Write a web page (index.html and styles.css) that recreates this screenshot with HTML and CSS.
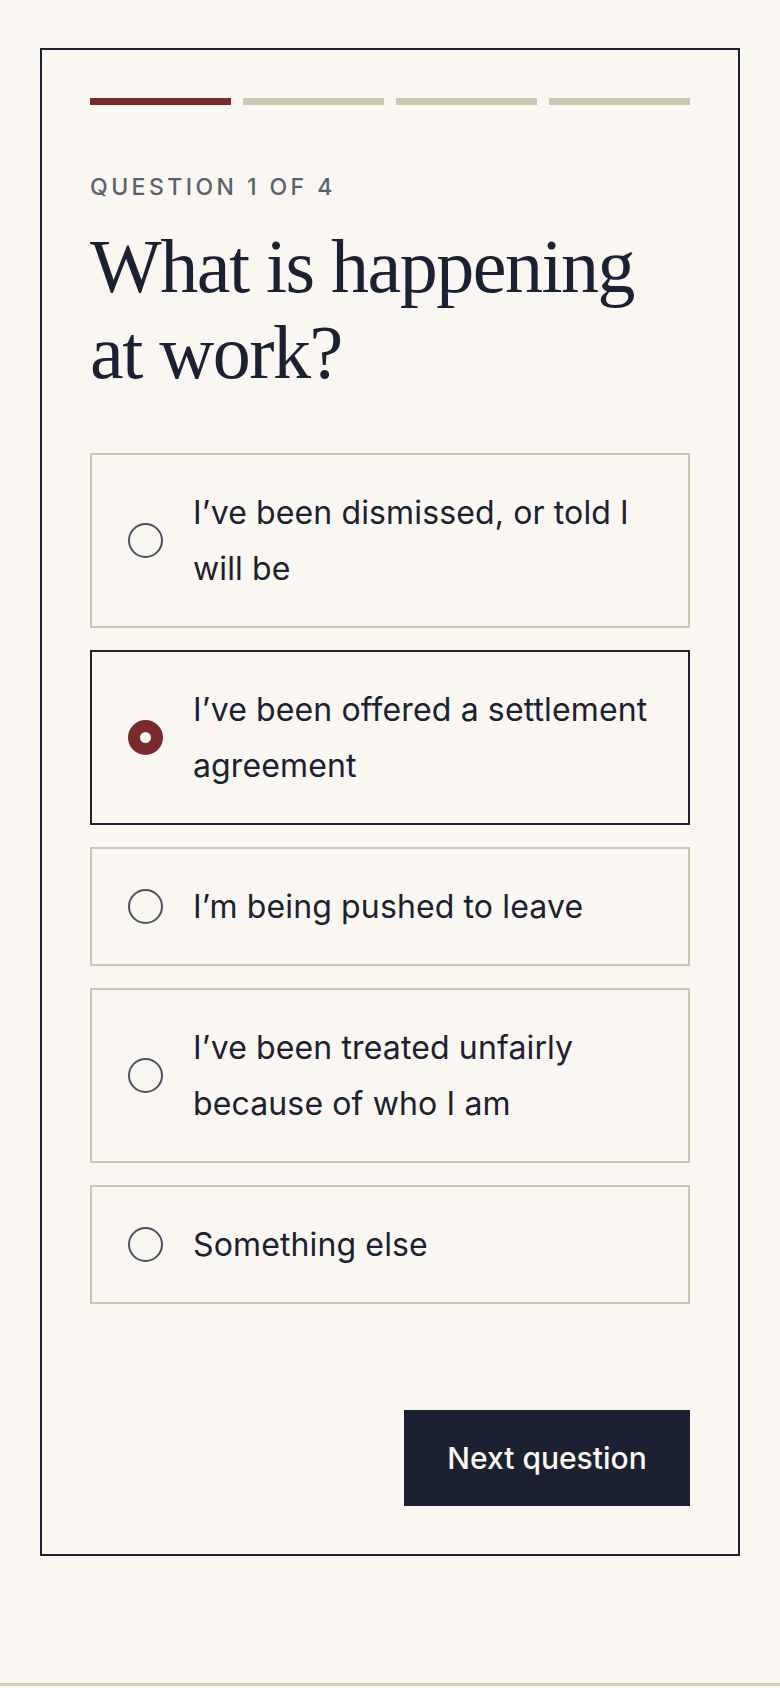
FILE: index.html
```html
<!DOCTYPE html>
<html lang="en">
<head>
<meta charset="utf-8">
<title>Question 1 of 4</title>
<link rel="stylesheet" href="styles.css">
</head>
<body>
<main class="page">
  <section class="card">
    <div class="progress">
      <span class="seg seg-done"></span>
      <span class="seg"></span>
      <span class="seg"></span>
      <span class="seg"></span>
    </div>
    <p class="eyebrow">QUESTION 1 OF 4</p>
    <h1 class="title">What is happening at work?</h1>
    <div class="options">
      <label class="option">
        <span class="radio"></span>
        <span class="option-text">I’ve been dismissed, or told I will be</span>
      </label>
      <label class="option option-selected">
        <span class="radio radio-on"></span>
        <span class="option-text">I’ve been offered a settlement agreement</span>
      </label>
      <label class="option">
        <span class="radio"></span>
        <span class="option-text">I’m being pushed to leave</span>
      </label>
      <label class="option">
        <span class="radio"></span>
        <span class="option-text">I’ve been treated unfairly because of who I am</span>
      </label>
      <label class="option">
        <span class="radio"></span>
        <span class="option-text">Something else</span>
      </label>
    </div>
    <div class="actions">
      <button class="next" type="button">Next question</button>
    </div>
  </section>
</main>
<footer class="footer"></footer>
</body>
</html>
```
FILE: styles.css
```css
* { box-sizing: border-box; }

html, body {
  margin: 0;
  padding: 0;
  background: #faf7f2;
}

body {
  font-family: "Inter", "Liberation Sans", sans-serif;
  color: #1b2130;
}

.page {
  padding: 48px 40px 127px;
}

.card {
  border: 2px solid #1b2130;
  padding: 48px;
  background: #faf7f2;
}

.progress {
  display: grid;
  grid-template-columns: repeat(4, 1fr);
  gap: 12px;
  margin-bottom: 68px;
}

.seg {
  display: block;
  height: 7px;
  background: #ccc6b2;
}

.seg-done {
  background: #7a2a2b;
}

.eyebrow {
  margin: 0;
  font-size: 23px;
  line-height: 28px;
  letter-spacing: 0.15em;
  color: #5a6171;
  font-weight: 500;
}

.title {
  margin: 22px 0 0;
  font-family: "Liberation Serif", "Times New Roman", serif;
  font-weight: 400;
  font-size: 76px;
  line-height: 86px;
  letter-spacing: -0.02em;
  color: #1b2130;
}

.options {
  margin-top: 58px;
  display: flex;
  flex-direction: column;
  gap: 22px;
}

.option {
  display: flex;
  align-items: center;
  gap: 30px;
  border: 2px solid #ccc6b2;
  padding: 29.5px 16px 29.5px 36px;
  cursor: pointer;
}

.option-selected {
  border-color: #1b2130;
}

.radio {
  flex: 0 0 35px;
  width: 35px;
  height: 35px;
  border-radius: 50%;
  border: 2px solid #4b5060;
  background: #faf7f2;
}

.radio-on {
  border: 12px solid #7a2a2b;
}

.option-text {
  font-size: 32px;
  line-height: 56px;
  letter-spacing: 0.004em;
  color: #1b2130;
}

.actions {
  margin-top: 106px;
  display: flex;
  justify-content: flex-end;
}

.next {
  border: 0;
  background: #1b2130;
  color: #fbf8f3;
  font-family: "Inter", "Liberation Sans", sans-serif;
  font-size: 30px;
  font-weight: 500;
  line-height: 36px;
  padding: 30px 40px;
  width: 286px;
  cursor: pointer;
}

.footer {
  border-top: 3px solid #d3cdb9;
  height: 3px;
}
```
